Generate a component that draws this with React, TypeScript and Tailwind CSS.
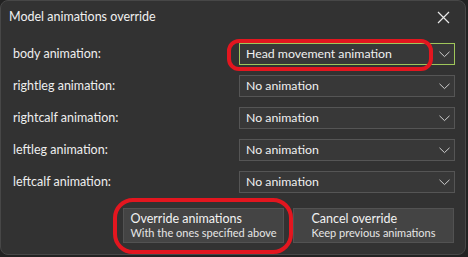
import React from "react";

const rows = [
  { label: "body animation:", value: "Head movement animation", active: true },
  { label: "rightleg animation:", value: "No animation" },
  { label: "rightcalf animation:", value: "No animation" },
  { label: "leftleg animation:", value: "No animation" },
  { label: "leftcalf animation:", value: "No animation" },
];

function Chevron() {
  return (
    <svg width="11" height="7" viewBox="0 0 11 7" className="shrink-0">
      <path d="M0.5 0.8 L5.5 5.6 L10.5 0.8" fill="none" stroke="#cfcfcf" strokeWidth="1" />
    </svg>
  );
}

function Select({ value, active }: { value: string; active?: boolean }) {
  return (
    <div
      className={
        active
          ? "w-[216px] h-[22px] flex items-center justify-between pl-[6px] pr-[4px] bg-[#383838] border border-[#9fc65a]"
          : "w-[216px] h-[22px] flex items-center justify-between pl-[6px] pr-[4px] bg-[#383838] border border-[#555555]"
      }
    >
      <span className="text-[12.3px] text-[#f0f0f0] leading-none">{value}</span>
      <Chevron />
    </div>
  );
}

function DialogButton({ title, sub }: { title: string; sub: string }) {
  return (
    <button className="w-[161px] h-[35px] bg-[#444444] border border-[#525252] flex items-center justify-center whitespace-nowrap">
      <div className="flex flex-col items-start">
        <span className="text-[12.5px] leading-[15px] text-[#f2f2f2]">{title}</span>
        <span className="text-[11px] leading-[14px] text-[#e6e6e6]">{sub}</span>
      </div>
    </button>
  );
}

export default function App() {
  return (
    <div
      className="w-[468px] h-[257px] bg-[#222222]"
      style={{ fontFamily: 'Lato, "Noto Sans", sans-serif' }}
    >
      <div className="relative w-[466px] h-[255px] rounded-[8px] border border-[#474747] bg-[#323232] flex flex-col">
        <div className="h-[33px] flex items-center justify-between pl-[8px] pr-[15px]">
          <span className="text-[12.5px] text-[#f0f0f0]">Model animations override</span>
          <svg width="13" height="13" viewBox="0 0 13 13">
            <path d="M1 1 L12 12 M12 1 L1 12" stroke="#e8e8e8" strokeWidth="1.2" />
          </svg>
        </div>

        <div className="flex flex-col gap-[10px] pt-[9px] pl-[12px] pr-[10px]">
          {rows.map((r) => (
            <div key={r.label} className="flex items-center justify-between h-[22px]">
              <span className="text-[12.5px] text-[#eeeeee]">{r.label}</span>
              <Select value={r.value} active={r.active} />
            </div>
          ))}
        </div>

        <div className="flex justify-end gap-[9px] pt-[15px] pr-[11px]">
          <DialogButton title="Override animations" sub="With the ones specified above" />
          <DialogButton title="Cancel override" sub="Keep previous animations" />
        </div>

        {/* red annotation marks */}
        <div className="absolute left-[226px] top-[38px] w-[206px] h-[32px] rounded-[12px] border-[4px] border-[#e3161f]" />
        <div className="absolute left-[112px] top-[197px] w-[180px] h-[56px] rounded-[20px] border-[4px] border-[#e3161f]" />
      </div>
    </div>
  );
}
